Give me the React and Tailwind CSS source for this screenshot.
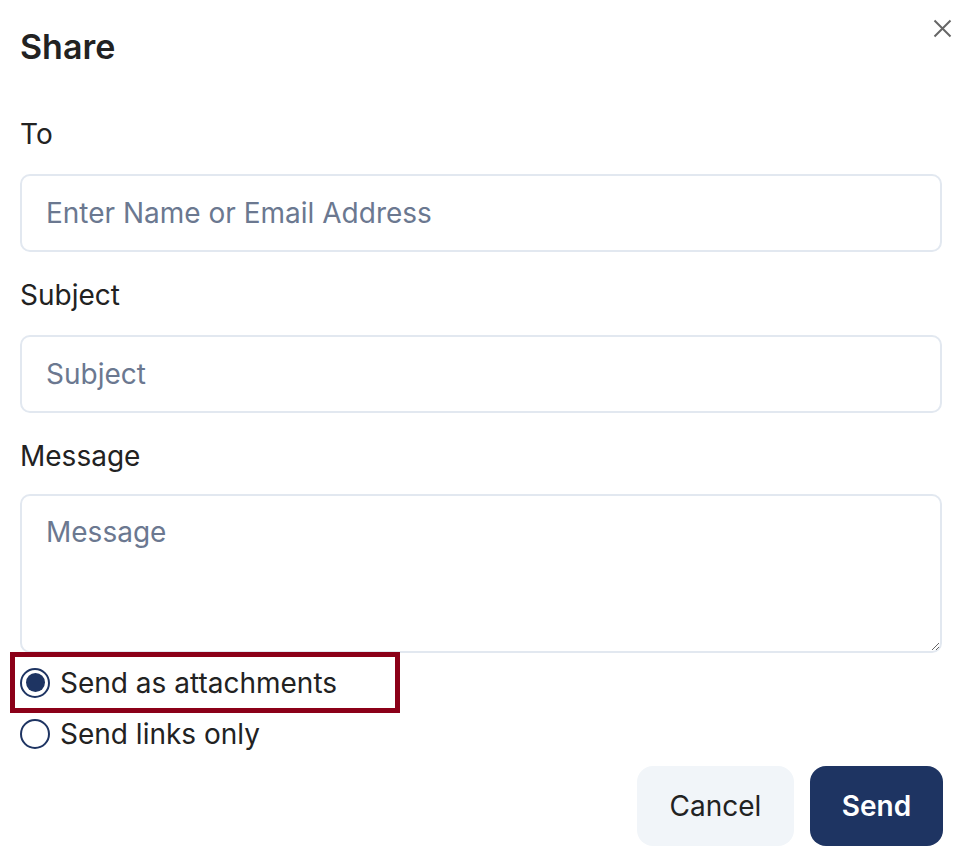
import React, { useState } from "react";

const font = { fontFamily: "Inter, 'Noto Sans', sans-serif" };

const Field = ({ label, placeholder, multiline }) => (
  <div className="flex flex-col">
    <label className="text-[28px] leading-[40px] text-[#222]">{label}</label>
    {multiline ? (
      <textarea
        placeholder={placeholder}
        className="mt-[18px] h-[159px] w-full rounded-[10px] border-2 border-[#e2e8f0] px-[24px] py-[18px] text-[28px] leading-[36px] text-[#222] placeholder:text-[#6b7890] outline-none"
      />
    ) : (
      <input
        placeholder={placeholder}
        className="mt-[20px] h-[78px] w-full rounded-[10px] border-2 border-[#e2e8f0] px-[24px] text-[28px] text-[#222] placeholder:text-[#6b7890] outline-none"
      />
    )}
  </div>
);

const Radio = ({ checked }) => (
  <span className="flex h-[30px] w-[30px] shrink-0 items-center justify-center rounded-full border-2 border-[#1e3462]">
    {checked && <span className="h-[19px] w-[19px] rounded-full bg-[#1e3462]" />}
  </span>
);

export default function App() {
  const [mode, setMode] = useState("attach");

  return (
    <div className="min-h-[864px] bg-white px-[20px] pt-[23px]" style={font}>
      <div className="flex items-start justify-between">
        <h1 className="text-[34px] leading-[48px] font-semibold text-[#222]">Share</h1>
        <button className="mt-[-4px] mr-[-10px] text-[#666]">
          <svg width="19" height="19" viewBox="0 0 19 19" fill="none" stroke="currentColor" strokeWidth="2">
            <path d="M1.5 1.5 L17.5 17.5 M17.5 1.5 L1.5 17.5" />
          </svg>
        </button>
      </div>

      <div className="mt-[43px] flex flex-col gap-[23px]">
        <Field label="To" placeholder="Enter Name or Email Address" />
        <Field label="Subject" placeholder="Subject" />
        <Field label="Message" placeholder="Message" multiline />
      </div>

      <div className="mt-[-1px] flex flex-col">
        <div
          onClick={() => setMode("attach")}
          className="-ml-[10px] flex h-[61px] w-[390px] cursor-pointer items-center gap-[10px] border-[5px] border-[#8b0018] pl-[5px]"
        >
          <Radio checked={mode === "attach"} />
          <span className="text-[28px] text-[#222]">Send as attachments</span>
        </div>
        <div onClick={() => setMode("links")} className="flex h-[41px] cursor-pointer items-center gap-[10px]">
          <Radio checked={mode === "links"} />
          <span className="text-[28px] text-[#222]">Send links only</span>
        </div>
      </div>

      <div className="mt-[12px] flex justify-end gap-[16px]">
        <button className="h-[80px] w-[157px] rounded-[16px] bg-[#f1f5f9] text-[28px] text-[#222]">
          Cancel
        </button>
        <button className="mr-[-1px] h-[80px] w-[133px] rounded-[16px] bg-[#1e3462] text-[28px] font-semibold text-white">
          Send
        </button>
      </div>
    </div>
  );
}
